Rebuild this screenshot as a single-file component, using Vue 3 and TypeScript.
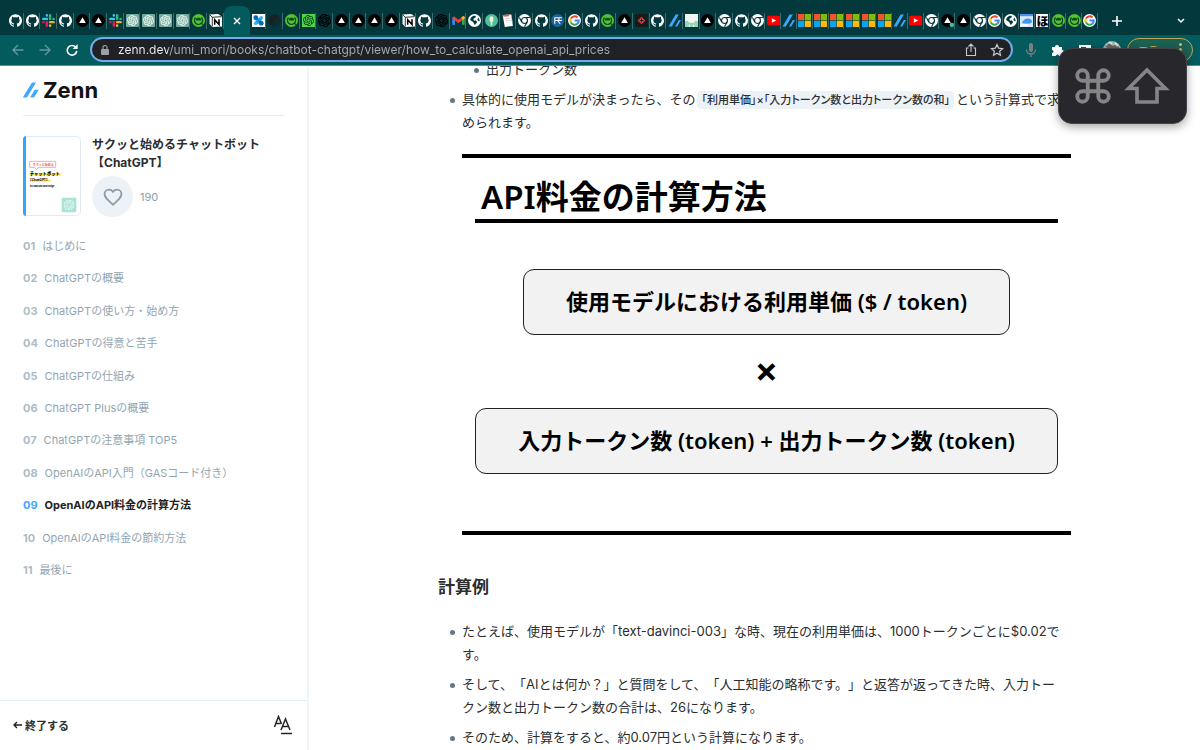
<script setup lang="ts">
import { ref } from 'vue'

interface Chapter {
  no: string
  title: string
}

const leadTabs: string[] = [
  'github', 'github', 'slack', 'github', 'vercel', 'vercel', 'slack',
  'gpt', 'gpt', 'gpt', 'gpt', 'qiita', 'notion',
]
const midTabs: string[] = [
  'molecule', 'dark', 'qiita', 'gptgreen', 'openai', 'vercel', 'vercel', 'vercel', 'vercel', 'notion',
  'github', 'openai', 'gmail', 'globe', 'mic', 'note', 'chrome', 'github', 'research', 'google',
  'github', 'qiita', 'vercel', 'diamond', 'github', 'zenn', 'castle', 'vercel', 'chrome', 'github',
]
const tailTabs: string[] = [
  'chrome', 'youtube', 'zenn', 'ms', 'ms', 'ms', 'ms', 'ms', 'ms', 'zenn', 'youtube',
  'chrome', 'vercelon', 'vercel', 'chrome', 'google', 'globe', 'cloud', 'ho', 'qiita', 'qiita', 'google',
]

const chapters: Chapter[] = [
  { no: '01', title: 'はじめに' },
  { no: '02', title: 'ChatGPTの概要' },
  { no: '03', title: 'ChatGPTの使い方・始め方' },
  { no: '04', title: 'ChatGPTの得意と苦手' },
  { no: '05', title: 'ChatGPTの仕組み' },
  { no: '06', title: 'ChatGPT Plusの概要' },
  { no: '07', title: 'ChatGPTの注意事項 TOP5' },
  { no: '08', title: 'OpenAIのAPI入門（GASコード付き）' },
  { no: '09', title: 'OpenAIのAPI料金の計算方法' },
  { no: '10', title: 'OpenAIのAPI料金の節約方法' },
  { no: '11', title: '最後に' },
]
const current = ref('09')
const address = ref('zenn.dev/umi_mori/books/chatbot-chatgpt/viewer/how_to_calculate_openai_api_prices')
</script>

<template>
  <div class="window">
    <svg class="sprite" aria-hidden="true">
      <symbol id="knot" viewBox="0 0 24 24">
        <path d="M22.2819 9.8211a5.9847 5.9847 0 0 0-.5157-4.9108 6.0462 6.0462 0 0 0-6.5098-2.9A6.0651 6.0651 0 0 0 4.9807 4.1818a5.9847 5.9847 0 0 0-3.9977 2.9 6.0462 6.0462 0 0 0 .7427 7.0966 5.98 5.98 0 0 0 .511 4.9107 6.051 6.051 0 0 0 6.5146 2.9001A5.9847 5.9847 0 0 0 13.2599 24a6.0557 6.0557 0 0 0 5.7718-4.2058 5.9894 5.9894 0 0 0 3.9977-2.9001 6.0557 6.0557 0 0 0-.7475-7.0729zm-9.022 12.6081a4.4755 4.4755 0 0 1-2.8764-1.0408l.1419-.0804 4.7783-2.7582a.7948.7948 0 0 0 .3927-.6813v-6.7369l2.02 1.1686a.071.071 0 0 1 .038.052v5.5826a4.504 4.504 0 0 1-4.4945 4.4944zm-9.6607-4.1254a4.4708 4.4708 0 0 1-.5346-3.0137l.142.0852 4.783 2.7582a.7712.7712 0 0 0 .7806 0l5.8428-3.3685v2.3324a.0804.0804 0 0 1-.0332.0615L9.74 19.9502a4.4992 4.4992 0 0 1-6.1408-1.6464zM2.3408 7.8956a4.485 4.485 0 0 1 2.3655-1.9728V11.6a.7664.7664 0 0 0 .3879.6765l5.8144 3.3543-2.0201 1.1685a.0757.0757 0 0 1-.071 0l-4.8303-2.7865A4.504 4.504 0 0 1 2.3408 7.872zm16.5963 3.8558L13.1038 8.364 15.1192 7.2a.0757.0757 0 0 1 .071 0l4.8303 2.7913a4.4944 4.4944 0 0 1-.6765 8.1042v-5.6772a.79.79 0 0 0-.407-.667zm2.0107-3.0231l-.142-.0852-4.7735-2.7818a.7759.7759 0 0 0-.7854 0L9.409 9.2297V6.8974a.0662.0662 0 0 1 .0284-.0615l4.8303-2.7866a4.4992 4.4992 0 0 1 6.6802 4.66zM8.3065 12.863l-2.02-1.1638a.0804.0804 0 0 1-.038-.0567V6.0742a4.4992 4.4992 0 0 1 7.3757-3.4537l-.142.0805L8.704 5.459a.7948.7948 0 0 0-.3927.6813zm1.0976-2.3654l2.602-1.4998 2.6069 1.4998v2.9994l-2.5974 1.4997-2.6067-1.4997Z" />
      </symbol>
      <symbol id="t-github" viewBox="0 0 24 24">
        <path fill="#fff" d="M12 .297c-6.63 0-12 5.373-12 12 0 5.303 3.438 9.8 8.205 11.385.6.113.82-.258.82-.577 0-.285-.01-1.04-.015-2.04-3.338.724-4.042-1.61-4.042-1.61C4.422 18.07 3.633 17.7 3.633 17.7c-1.087-.744.084-.729.084-.729 1.205.084 1.838 1.236 1.838 1.236 1.07 1.835 2.809 1.305 3.495.998.108-.776.417-1.305.76-1.605-2.665-.3-5.466-1.332-5.466-5.93 0-1.31.465-2.38 1.235-3.22-.135-.303-.54-1.523.105-3.176 0 0 1.005-.322 3.3 1.23.96-.267 1.98-.399 3-.405 1.02.006 2.04.138 3 .405 2.28-1.552 3.285-1.23 3.285-1.23.645 1.653.24 2.873.12 3.176.765.84 1.23 1.91 1.23 3.22 0 4.61-2.805 5.625-5.475 5.92.42.36.81 1.096.81 2.22 0 1.606-.015 2.896-.015 3.286 0 .315.21.69.825.57C20.565 22.092 24 17.592 24 12.297c0-6.627-5.373-12-12-12" />
      </symbol>
      <symbol id="t-slack" viewBox="0 0 24 24">
        <g stroke-width="4.6" stroke-linecap="round">
          <path stroke="#36c5f0" d="M2.5 9H9M9 2.5v.2" />
          <path stroke="#2eb67d" d="M15 2.5V9M21.5 9h-.2" />
          <path stroke="#ecb22e" d="M21.5 15H15M15 21.5v-.2" />
          <path stroke="#e01e5a" d="M9 21.5V15M2.5 15h.2" />
        </g>
      </symbol>
      <symbol id="t-vercel" viewBox="0 0 24 24">
        <circle cx="12" cy="12" r="12" fill="#000" /><path fill="#fff" d="M12 6l6.2 10.6H5.8z" />
      </symbol>
      <symbol id="t-vercelon" viewBox="0 0 24 24">
        <circle cx="12" cy="12" r="12" fill="#000" /><path fill="#fff" d="M12 6l6.2 10.6H5.8z" /><circle cx="20" cy="20" r="4" fill="#3fc6a0" />
      </symbol>
      <symbol id="t-gpt" viewBox="0 0 24 24">
        <rect width="24" height="24" rx="2" fill="#74a99b" /><use href="#knot" x="2" y="2" width="20" height="20" fill="#e9f6f1" stroke="#e9f6f1" stroke-width=".6" />
      </symbol>
      <symbol id="t-gptgreen" viewBox="0 0 24 24">
        <rect width="24" height="24" fill="#4fd44e" /><use href="#knot" x="2" y="2" width="20" height="20" fill="#07310b" />
      </symbol>
      <symbol id="t-openai" viewBox="0 0 24 24"><use href="#knot" width="24" height="24" fill="#000" stroke="#000" stroke-width=".5" /></symbol>
      <symbol id="t-qiita" viewBox="0 0 24 24">
        <circle cx="12" cy="12" r="12" fill="#55c32b" /><path d="M6.500 6.500a7.500 7.500 0 1 0 11 0" fill="none" stroke="#0c4a26" stroke-width="2.4" />
        <path d="M7 12h10v-3c-2-3-8-3-10 0z" fill="#0c4a26" /><path d="M17 17l4 3" stroke="#0c4a26" stroke-width="2.400" />
      </symbol>
      <symbol id="t-notion" viewBox="0 0 24 24">
        <path fill="#fff" d="M1 1l16-1 7 5v18L6 24l-5-6z" /><path d="M2 2l4 4 17-1M6 6v17" stroke="#000" stroke-width="1.500" fill="none" />
        <path fill="none" stroke="#000" stroke-width="2.8" d="M10.500 20V10.500l8 9V9.500" />
      </symbol>
      <symbol id="t-molecule" viewBox="0 0 24 24">
        <rect width="24" height="24" fill="#fff" /><path d="M7 7l10 10M17 8l-9 9" stroke="#1594dc" stroke-width="6" />
        <circle cx="7" cy="7" r="4.500" fill="#0868b8" /><circle cx="17" cy="7" r="3.500" fill="#40b3ec" /><circle cx="17" cy="17" r="4.500" fill="#0868b8" /><circle cx="7" cy="17" r="3.500" fill="#40b3ec" />
      </symbol>
      <symbol id="t-dark" viewBox="0 0 24 24">
        <circle cx="12" cy="12" r="11" fill="#1a2123" /><path d="M5 23L23 5M11 24l12-12" stroke="#03383c" stroke-width="2" />
      </symbol>
      <symbol id="t-gmail" viewBox="0 0 24 24">
        <path d="M3 20V6" stroke="#4285f4" stroke-width="5" /><path d="M21 20V6" stroke="#34a853" stroke-width="5" /><path d="M2 6l10 8 10-8" fill="none" stroke="#ea4335" stroke-width="5" /><path d="M18.5 9L23 5" stroke="#fbbc04" stroke-width="5" />
      </symbol>
      <symbol id="t-globe" viewBox="0 0 24 24">
        <circle cx="12" cy="12" r="12" fill="#fff" />
        <path fill="#03383c" d="M13 3c2 0 2 3 0 4l-3 2 1 3h4l2 3-4 5c-2 0-2-3-3-5l-6-4c0-4 4-8 9-8zM19 7c2 2 3 5 2 7l-4-3z" />
      </symbol>
      <symbol id="t-mic" viewBox="0 0 24 24">
        <circle cx="12" cy="12" r="12" fill="#4fc19a" /><rect x="8.5" y="4" width="7" height="11" rx="3.5" fill="#f3ecd0" /><path d="M12 15v6" stroke="#f3ecd0" stroke-width="3" />
      </symbol>
      <symbol id="t-note" viewBox="0 0 24 24">
        <path d="M3 2l16-1 3 21-15 2z" fill="#fff" /><path d="M3 2l12-1v3L5 5z" fill="#e25b50" /><path d="M7 9l10-1M8 13l10-1M18 1l3 15" stroke="#b9b9b9" stroke-width="1.2" />
      </symbol>
      <symbol id="t-chrome" viewBox="0 0 24 24">
        <circle cx="12" cy="12" r="12" fill="#fff" /><circle cx="12" cy="12" r="5.5" fill="#fff" stroke="#03383c" stroke-width="2.2" />
        <path d="M12 6.500H22M7 15L2.500 6.500M16.800 15L12 23.500" stroke="#03383c" stroke-width="2" />
      </symbol>
      <symbol id="t-research" viewBox="0 0 24 24">
        <circle cx="12" cy="12" r="12" fill="#1b6399" /><path d="M7 18V7h5c4 0 4 5 0 5H8m4 0l5 6M14 7h6M14 12h6" stroke="#fff" stroke-width="2" fill="none" />
      </symbol>
      <symbol id="t-google" viewBox="0 0 24 24">
        <circle cx="12" cy="12" r="12" fill="#fff" />
        <g fill="none" stroke-width="3.8"><path stroke="#ea4335" d="M5.200 8.500A7.800 7.800 0 0 1 17.500 6.500" /><path stroke="#fbbc04" d="M5.200 8.500a7.800 7.800 0 0 0 0 7" /><path stroke="#34a853" d="M5.200 15.500a7.800 7.800 0 0 0 12 2.500" /><path stroke="#4285f4" d="M17.200 18a7.800 7.800 0 0 0 2.600-6H12" /></g>
      </symbol>
      <symbol id="t-diamond" viewBox="0 0 24 24">
        <rect width="24" height="24" fill="#181a1c" /><path d="M12 5l7 7-7 7-7-7z" fill="#d6474a" /><path d="M12 8v8M8 12h8" stroke="#181a1c" stroke-width="1.600" />
      </symbol>
      <symbol id="t-zenn" viewBox="0 0 24 24">
        <path fill="#3ea8ff" d="M1 23L14 1h6L7 23zM13 23l7-12h4l-7 12z" />
      </symbol>
      <symbol id="t-castle" viewBox="0 0 24 24">
        <rect width="24" height="24" fill="#f3f7f4" /><path fill="#9bd3b9" d="M0 14l4-2 4 4h8l4-4 4 2v10h-7v-4h-2v4H9v-4H7v4H0z" />
      </symbol>
      <symbol id="t-youtube" viewBox="0 0 24 24">
        <rect y="3" width="24" height="18" rx="3" fill="#f00" /><path fill="#fff" d="M9 8l8 4-8 4z" />
      </symbol>
      <symbol id="t-ms" viewBox="0 0 24 24">
        <path fill="#f35325" d="M0 0h11.500v11.500H0z" /><path fill="#81bc06" d="M12.500 0H24v11.500H12.500z" /><path fill="#05a6f0" d="M0 12.500h11.500V24H0z" /><path fill="#ffba08" d="M12.500 12.500H24V24H12.500z" />
      </symbol>
      <symbol id="t-cloud" viewBox="0 0 24 24">
        <rect width="24" height="24" fill="#d8e8fb" /><path d="M0 0h24v4H0z" fill="#4b91ed" /><path d="M4 17c0-9 16-12 18-4 1 5-5 5-8 5z" fill="#4297f3" /><path d="M0 22c5-5 9 2 15-3" stroke="#fff" stroke-width="3" fill="none" />
      </symbol>
    </svg>

    <header class="browser">
      <div class="strip">
        <div class="group lead">
          <button v-for="(name, i) in leadTabs" :key="i" class="tab" type="button" :aria-label="name">
            <svg class="fav"><use :href="'#t-' + name" /></svg>
          </button>
        </div>
        <button class="active-tab" type="button" aria-label="タブを閉じる">
          <svg viewBox="0 0 8 8" width="8" height="8"><path d="M1 1l6 6M7 1L1 7" stroke="#fff" stroke-width="1.400" /></svg>
        </button>
        <div class="group mid">
          <button v-for="(name, i) in midTabs" :key="i" class="tab" type="button" :aria-label="name">
            <svg class="fav"><use :href="'#t-' + name" /></svg>
          </button>
        </div>
        <div class="group tail">
          <button v-for="(name, i) in tailTabs" :key="i" class="tab" type="button" :aria-label="name">
            <span v-if="name === 'ho'" class="ho">ほ</span>
            <svg v-else class="fav"><use :href="'#t-' + name" /></svg>
          </button>
        </div>
        <div class="strip-end">
          <button type="button" aria-label="新しいタブ">
            <svg viewBox="0 0 10 10" width="10" height="10"><path d="M5 0v10M0 5h10" stroke="#fff" stroke-width="1.600" /></svg>
          </button>
          <button type="button" aria-label="タブを検索">
            <svg viewBox="0 0 8 6" width="8" height="6"><path d="M1 1l3 3 3-3" fill="none" stroke="#fff" stroke-width="1.500" /></svg>
          </button>
        </div>
      </div>

      <div class="toolbar">
        <div class="nav">
          <button type="button" aria-label="戻る"><svg viewBox="0 0 12 12" width="12" height="12"><path d="M11.500 6H1M6 1L1 6l5 5" fill="none" stroke="#5f9a99" stroke-width="1.400" /></svg></button>
          <button type="button" aria-label="進む"><svg viewBox="0 0 12 12" width="12" height="12"><path d="M.5 6H11M6 1l5 5-5 5" fill="none" stroke="#5f9a99" stroke-width="1.400" /></svg></button>
          <button type="button" aria-label="再読み込み"><svg viewBox="0 0 12 12" width="12" height="12"><path d="M10 3.500A4.800 4.800 0 1 0 10.800 7" fill="none" stroke="#fff" stroke-width="1.600" /><path d="M11.600 0v5H6.600z" fill="#fff" /></svg></button>
        </div>
        <div class="omnibox">
          <svg class="lock" viewBox="0 0 8 10" width="8" height="10"><rect y="4" width="8" height="6" rx="1" fill="#9aa0a3" /><path d="M2 4V2.500a2 2 0 0 1 4 0V4" fill="none" stroke="#9aa0a3" stroke-width="1.200" /></svg>
          <input v-model="address" type="text" aria-label="アドレス" spellcheck="false">
          <button type="button" aria-label="共有"><svg viewBox="0 0 12 14" width="12" height="14"><path d="M3.500 5H1.500v7.500h9V5h-2M6 9V1.500M3.500 3.500L6 1l2.500 2.500" fill="none" stroke="#c5c9cb" stroke-width="1.100" /></svg></button>
          <button type="button" aria-label="ブックマーク"><svg viewBox="0 0 14 14" width="14" height="14"><path d="M7 1.500l1.600 3.700 4 .4-3 2.700.9 4L7 10.200l-3.500 2.100.9-4-3-2.700 4-.4z" fill="none" stroke="#c5c9cb" stroke-width="1.200" /></svg></button>
        </div>
        <div class="extensions">
          <button type="button" aria-label="音声"><svg viewBox="0 0 12 14" width="12" height="14"><rect x="4" y="0" width="4" height="9" rx="2" fill="#7c8081" /><path d="M1.500 6.500a4.500 4.500 0 0 0 9 0M6 11v3" fill="none" stroke="#7c8081" stroke-width="1.300" /></svg></button>
          <button type="button" aria-label="拡張機能"><svg viewBox="0 0 12 12" width="12" height="12"><path fill="#fff" d="M0 3h3a2 2 0 1 1 4 0h3v3a2 2 0 1 1 0 4v2H7a1.500 1.500 0 0 0-3 0H0V9a1.500 1.500 0 0 0 0-3z" /></svg></button>
          <button type="button" aria-label="サイドパネル"><svg viewBox="0 0 12 12" width="12" height="12"><path fill="none" stroke="#fff" stroke-width="2" d="M1 2h10v9H1z" /><path fill="#fff" d="M7 2h4v9H7z" /></svg></button>
          <button type="button" aria-label="プロフィール"><svg viewBox="0 0 18 18" width="18" height="18"><circle cx="9" cy="9" r="9" fill="#9ab6c1" /><path d="M2 6l5-4 3 3 4-2 3 5-5-1-4 3-3-3z" fill="#6d6256" /><path d="M6 1l3 2M12 2l3 3" stroke="#e8e2c8" stroke-width="2" /></svg></button>
          <button class="error-pill" type="button"><span>エラー</span><svg viewBox="0 0 3 13" width="3" height="13"><g fill="#d8b45a"><circle cx="1.500" cy="1.500" r="1.500" /><circle cx="1.500" cy="6.500" r="1.500" /><circle cx="1.500" cy="11.500" r="1.500" /></g></svg></button>
        </div>
      </div>
    </header>

    <div class="page">
      <aside class="sidebar">
        <div class="side-body">
          <a class="logo" href="#">
            <svg viewBox="0 0 16 16" width="16" height="16"><path fill="#3ea8ff" d="M.300 15.500h3.600L13 .5H9.800c-.5 0-.9.2-1.100.6L.100 15c-.1.200 0 .5.200.5zM11.300 15l4.400-7.300h-3.200c-.6 0-.9.200-1.200.6L7.200 15.400h3.300c.3 0 .6-.1.800-.4z" /></svg>
            <span>Zenn</span>
          </a>
          <div class="book">
            <svg class="cover" viewBox="0 0 174 240" width="58" height="80">
              <rect x="1.500" y="1.500" width="171" height="237" rx="11" fill="#fff" stroke="#e1ebf5" stroke-width="3" />
              <path d="M9 0v240C3 240 0 236 0 230V10C0 4 3 0 9 0z" fill="#35a5f4" />
              <path d="M20 76h78v18H46l-5 7-6-7H20z" fill="#fff" stroke="#ef8478" stroke-width="2" />
              <text x="29" y="89" class="cover-red">サクッと始める</text>
              <path d="M19 116h94M19 134h64" stroke="#fff04a" stroke-width="7" />
              <text x="20" y="118" class="cover-title">チャットボット</text>
              <text x="16" y="135" class="cover-sub">【ChatGPT】</text>
              <text x="21" y="154" class="cover-by">by Mayumi Morishige</text>
              <rect x="116" y="185" width="44" height="44" rx="4" fill="#a8e3d5" />
              <use href="#knot" x="122" y="191" width="32" height="32" fill="#edfbf7" />
            </svg>
            <div class="book-info">
              <a class="book-title" href="#">サクッと始めるチャットボット<br>【ChatGPT】</a>
              <div class="likes">
                <button type="button" aria-label="いいね"><svg viewBox="0 0 24 24" width="22" height="22"><path d="M12 20.500l-1.300-1.200C5.700 14.800 2.800 12.200 2.800 8.700 2.800 6 4.900 3.900 7.600 3.900c1.700 0 3.400.9 4.400 2.300 1-1.400 2.700-2.300 4.400-2.300 2.700 0 4.800 2.100 4.800 4.800 0 3.500-2.900 6.100-7.900 10.600z" fill="none" stroke="#8b9fab" stroke-width="2" /></svg></button>
                <span>190</span>
              </div>
            </div>
          </div>
          <ol class="chapters">
            <li v-for="c in chapters" :key="c.no">
              <a href="#" :class="{ current: c.no === current }" @click.prevent="current = c.no"><span class="no">{{ c.no }}</span><span>{{ c.title }}</span></a>
            </li>
          </ol>
        </div>
        <footer class="side-foot">
          <a href="#"><svg viewBox="0 0 9 8" width="9" height="8"><path d="M9 4H1M4 1L1 4l3 3" fill="none" stroke="#222" stroke-width="1.400" /></svg>終了する</a>
          <button type="button" aria-label="文字サイズ"><svg viewBox="0 0 20 20" width="20" height="20"><path d="M1.500 12L5.500 1.500 8.500 9M3 8.500h4.500M8 15l4.500-11L17 15M9.500 11.500h6M8 18.500h11" fill="none" stroke="#252525" stroke-width="1.500" /></svg></button>
        </footer>
      </aside>

      <main class="reader">
        <article>
          <ul>
            <li class="nested">出力トークン数</li>
            <li>具体的に使用モデルが決まったら、その<code>「利用単価」×「入力トークン数と出力トークン数の和」</code>という計算式で求<br>められます。</li>
          </ul>
          <figure>
            <h1>API料金の計算方法</h1>
            <div class="term short">使用モデルにおける利用単価 ($ / token)</div>
            <div class="times">×</div>
            <div class="term">入力トークン数 (token) + 出力トークン数 (token)</div>
          </figure>
          <h2>計算例</h2>
          <ul>
            <li>たとえば、使用モデルが「text-davinci-003」な時、現在の利用単価は、1000トークンごとに$0.02で<br>す。</li>
            <li>そして、「AIとは何か？」と質問をして、「人工知能の略称です。」と返答が返ってきた時、入力トー<br>クン数と出力トークン数の合計は、26になります。</li>
            <li>そのため、計算をすると、約0.07円という計算になります。</li>
          </ul>
        </article>
      </main>
    </div>

    <div class="keys" role="status" aria-label="Command Shift">
      <svg viewBox="0 0 24 24" width="42" height="42"><path d="M15 6v12a3 3 0 1 0 3-3H6a3 3 0 1 0 3 3V6a3 3 0 1 0-3 3h12a3 3 0 1 0-3-3" fill="none" stroke="#858587" stroke-width="2.200" /></svg>
      <svg viewBox="0 0 46 38" width="46" height="38"><path d="M23 3L4.500 21.500H13V35h20V21.500h8.500z" fill="none" stroke="#858587" stroke-width="3.600" /></svg>
    </div>
  </div>
</template>

<style>
body {
  margin: 0;
  background: #fff;
}
</style>

<style scoped>
* {
  box-sizing: border-box;
}
.window {
  position: relative;
  display: flex;
  flex-direction: column;
  height: 100vh;
  overflow: hidden;
  font-family: Inter, "Noto Sans CJK JP", sans-serif;
  text-spacing-trim: space-all;
  color: #2b2d2f;
}
.sprite {
  position: absolute;
  width: 0;
  height: 0;
}
button {
  display: flex;
  align-items: center;
  justify-content: center;
  margin: 0;
  padding: 0;
  border: 0;
  background: none;
  font: inherit;
  cursor: pointer;
}
a {
  color: inherit;
  text-decoration: none;
}
ul, ol {
  margin: 0;
  padding: 0;
  list-style: none;
}
svg {
  flex: none;
}

.strip {
  display: flex;
  height: 35px;
  padding: 6px 0 0 7px;
  background: #03383d;
}
.group {
  display: flex;
  flex-basis: 0;
  min-width: 0;
}
.lead { flex-grow: 217; }
.mid { flex-grow: 500; }
.tail { flex-grow: 349; }
.tab {
  flex: 1 1 0;
  min-width: 0;
  background: linear-gradient(#3c6b6e, #3c6b6e) right center / 1px 16px no-repeat;
}
.fav {
  width: 13px;
  height: 13px;
}
.ho {
  background: #fff;
  color: #000;
  font: 900 12px/13px "Noto Sans CJK JP", sans-serif;
}
.active-tab {
  flex: none;
  width: 26px;
  border-radius: 8px 8px 0 0;
  background: #045b5e;
}
.strip-end {
  display: flex;
  flex: none;
  justify-content: space-between;
  width: 102px;
  padding: 0 15px 0 14px;
}
.toolbar {
  display: flex;
  align-items: center;
  height: 31px;
  padding: 0 7px 1px 12px;
  border-bottom: 1px solid #4f9291;
  background: #045b5e;
}
.nav {
  display: flex;
  gap: 15px;
  margin-right: 12px;
}
.omnibox {
  display: flex;
  flex: 1;
  align-items: center;
  gap: 13px;
  height: 25px;
  padding: 0 7px 0 9px;
  border: 2px solid #75a9ea;
  border-radius: 13px;
  background: #202124;
}
.lock {
  margin-right: -4px;
}
.omnibox input {
  flex: 1;
  min-width: 0;
  padding: 0;
  border: 0;
  outline: 0;
  background: linear-gradient(90deg, #f1f3f4 50px, #a3b1b4 50px);
  -webkit-background-clip: text;
  background-clip: text;
  color: transparent;
  font: 12px/18px Inter, sans-serif;
}
.extensions {
  display: flex;
  align-items: center;
  gap: 15px;
  margin-left: 12px;
}
.extensions button:nth-child(4) {
  margin-left: -3px;
}
.extensions .error-pill {
  justify-content: space-between;
  width: 66px;
  height: 24px;
  margin-left: -9px;
  padding: 0 10px;
  border: 1px solid #b9a75a;
  border-radius: 12px;
  background: #1b6154;
  color: #d8b45a;
  font-size: 10px;
}

.page {
  display: flex;
  flex: 1;
  min-height: 0;
}
.sidebar {
  display: flex;
  flex: none;
  flex-direction: column;
  width: 309px;
  border-right: 2px solid #eff5fb;
}
.side-body {
  flex: 1;
  padding: 0 23px;
}
.logo {
  display: flex;
  align-items: center;
  gap: 4px;
  height: 50px;
  padding-bottom: 2px;
  border-bottom: 1px solid #e6eff3;
  color: #101214;
  font-size: 22px;
  font-weight: 700;
}
.book {
  display: flex;
  gap: 11px;
  margin-top: 20px;
}
.cover-red { font: 700 9px "Noto Sans CJK JP", sans-serif; fill: #e4594b; }
.cover-title { font: 900 13px "Noto Sans CJK JP", sans-serif; }
.cover-sub { font: 700 10px "Noto Sans CJK JP", sans-serif; }
.cover-by { font: 700 7px Inter, sans-serif; }
.book-title {
  display: block;
  font-size: 12px;
  font-weight: 700;
  line-height: 18px;
}
.likes {
  display: flex;
  align-items: center;
  gap: 7px;
  margin-top: 4px;
  color: #8b9fab;
  font-size: 11px;
}
.likes button {
  width: 41px;
  height: 41px;
  border-radius: 50%;
  background: #edf2f7;
}
.chapters {
  display: flex;
  flex-direction: column;
  justify-content: space-between;
  height: 340px;
  margin-top: 21px;
  color: #93a5b1;
  font-size: 11px;
  line-height: 16px;
}
.chapters a {
  display: flex;
  gap: 7px;
  white-space: nowrap;
}
.no {
  color: #acbcc7;
  font-weight: 700;
}
.chapters .current {
  color: #222;
  font-weight: 700;
}
.current .no {
  color: #3ea8ff;
}
.side-foot {
  display: flex;
  align-items: center;
  justify-content: space-between;
  height: 50px;
  padding: 0 14px 2px 13px;
  border-top: 1px solid #e0f0f6;
  font-size: 11px;
  font-weight: 700;
}
.side-foot a {
  display: flex;
  align-items: center;
  gap: 3px;
}

.reader {
  flex: 1;
  min-width: 0;
  overflow: hidden;
}
article {
  max-width: 633px;
  margin: -8px auto 0;
}
article ul {
  display: flex;
  flex-direction: column;
  gap: 7px;
  padding-left: 24px;
}
article li {
  position: relative;
  font-size: 13px;
  line-height: 23px;
  white-space: nowrap;
}
article li::before {
  content: "";
  position: absolute;
  top: 10px;
  left: -12px;
  width: 5px;
  height: 5px;
  border-radius: 50%;
  background: #667783;
}
article .nested {
  margin-left: 24px;
}
code {
  margin: 0 2px;
  padding: 2px 4px;
  border-radius: 4px;
  background: #edf2f7;
  font-family: Inter, "Noto Sans CJK JP", sans-serif;
  font-feature-settings: "palt";
  font-size: 11px;
  font-weight: 500;
  line-height: 16px;
}
figure {
  display: flex;
  flex-direction: column;
  align-items: stretch;
  margin: 20px 0 0 24px;
  padding: 16px 13px 57px;
  border: solid #000;
  border-width: 4px 0;
  color: #000;
  font-family: "Noto Sans", "Noto Sans CJK JP", sans-serif;
  font-weight: 600;
}
h1 {
  margin: 0 0 46px;
  padding: 0 6px;
  border-bottom: 4px solid #000;
  font-size: 33px;
  font-weight: 600;
  line-height: 45px;
}
.term {
  padding: 15px 0 17px;
  border: 1px solid #222;
  border-radius: 11px;
  background: #f2f2f2;
  font-size: 22px;
  line-height: 32px;
  text-align: center;
}
.short {
  margin: 0 48px;
}
.times {
  padding-bottom: 2px;
  font-size: 40px;
  font-weight: 700;
  line-height: 71px;
  text-align: center;
}
h2 {
  margin: 39px 0 19px;
  font-size: 17px;
  line-height: 27px;
}

.keys {
  position: absolute;
  top: 48px;
  right: 13px;
  display: flex;
  align-items: center;
  justify-content: center;
  gap: 10px;
  width: 129px;
  height: 76px;
  padding-right: 4px;
  border: 1px solid #444448;
  border-radius: 14px;
  background: #28272b;
  box-shadow: 0 3px 10px rgba(0, 0, 0, 0.35);
}
</style>
